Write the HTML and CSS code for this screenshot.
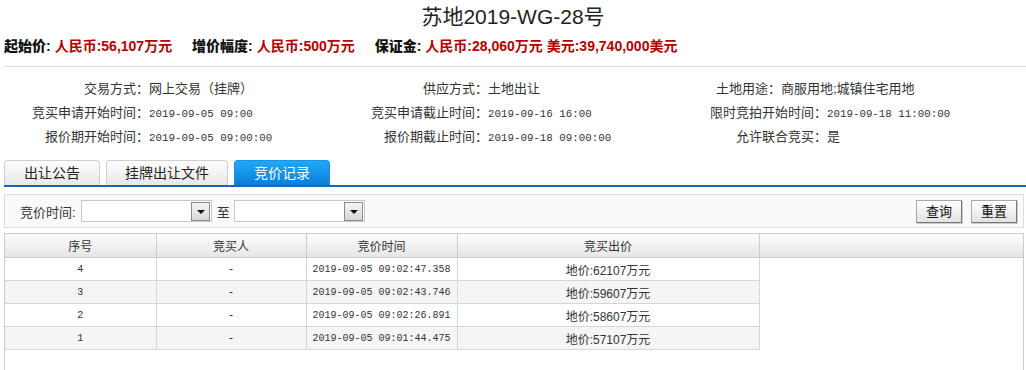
FILE: index.html
```html
<!DOCTYPE html>
<html lang="zh-CN">
<head>
    <meta charset="UTF-8">
    <meta name="viewport" content="width=device-width, initial-scale=1.0">
    <title>苏地2019-WG-28号</title>
    <link rel="stylesheet" href="styles.css">
</head>
<body>
    <h1 class="title">苏地2019-WG-28号</h1>

    <div class="price-row">
        <span class="price-item"><b>起始价:</b><em>人民币:56,107万元</em></span>
        <span class="price-item"><b>增价幅度:</b><em>人民币:500万元</em></span>
        <span class="price-item"><b>保证金:</b><em>人民币:28,060万元 美元:39,740,000美元</em></span>
    </div>

    <div class="info">
        <div class="info-row first">
            <span class="label">交易方式：</span><span class="value">网上交易（挂牌）</span>
            <span class="label">供应方式：</span><span class="value">土地出让</span>
            <span class="label">土地用途：</span><span class="value">商服用地;城镇住宅用地</span>
        </div>
        <div class="info-row">
            <span class="label">竞买申请开始时间：</span><span class="value"><span class="num">2019-09-05 09:00</span></span>
            <span class="label">竞买申请截止时间：</span><span class="value"><span class="num">2019-09-16 16:00</span></span>
            <span class="label">限时竞拍开始时间：</span><span class="value"><span class="num">2019-09-18 11:00:00</span></span>
        </div>
        <div class="info-row">
            <span class="label">报价期开始时间：</span><span class="value"><span class="num">2019-09-05 09:00:00</span></span>
            <span class="label">报价期截止时间：</span><span class="value"><span class="num">2019-09-18 09:00:00</span></span>
            <span class="label">允许联合竞买：</span><span class="value">是</span>
        </div>
    </div>

    <div class="tabs">
        <div class="tab">出让公告</div>
        <div class="tab">挂牌出让文件</div>
        <div class="tab active">竞价记录</div>
    </div>

    <div class="filter">
        <span class="filter-label">竞价时间:</span>
        <div class="combo"><span class="combo-btn"></span></div>
        <span class="to">至</span>
        <div class="combo"><span class="combo-btn"></span></div>
        <div class="buttons">
            <button class="btn">查询</button>
            <button class="btn">重置</button>
        </div>
    </div>

    <div class="grid-box">
        <table class="grid">
            <colgroup>
                <col style="width: 151px">
                <col style="width: 150px">
                <col style="width: 151px">
                <col style="width: 302px">
                <col>
            </colgroup>
            <thead>
                <tr><th>序号</th><th>竞买人</th><th>竞价时间</th><th>竞买出价</th><th></th></tr>
            </thead>
            <tbody>
                <tr><td class="num">4</td><td>-</td><td class="num">2019-09-05 09:02:47.358</td><td class="price">地价:62107万元</td></tr>
                <tr><td class="num">3</td><td>-</td><td class="num">2019-09-05 09:02:43.746</td><td class="price">地价:59607万元</td></tr>
                <tr><td class="num">2</td><td>-</td><td class="num">2019-09-05 09:02:26.891</td><td class="price">地价:58607万元</td></tr>
                <tr><td class="num">1</td><td>-</td><td class="num">2019-09-05 09:01:44.475</td><td class="price">地价:57107万元</td></tr>
            </tbody>
        </table>
    </div>
</body>
</html>
```

FILE: styles.css
```css
html, body {
    overflow: hidden;
}
body {
    margin: 0;
    font-family: "Liberation Sans", "Noto Sans CJK SC", sans-serif;
    font-size: 12px;
    color: #333;
    background: #fff;
}
.title {
    margin: 0;
    height: 34px;
    line-height: 34px;
    font-size: 21px;
    font-weight: normal;
    text-align: center;
    color: #222;
}
.price-row {
    height: 24px;
    line-height: 24px;
    margin-left: 4px;
    padding-bottom: 8px;
    font-size: 14px;
    font-weight: bold;
    border-bottom: 1px solid #ddd;
}
.price-item {
    margin-right: 16px;
    color: #111;
}
.price-item em {
    font-style: normal;
    color: #b80000;
    margin-left: 4px;
}
.info {
    padding-top: 10px;
    font-size: 13px;
}
.info-row {
    display: grid;
    grid-template-columns: 149px 191px 148px 191px 148px 1fr;
    height: 24px;
    line-height: 24px;
}
.info-row.first {
    grid-template-columns: 149px 191px 148px 191px 102px 1fr;
}
.label {
    text-align: right;
    white-space: nowrap;
}
.value {
    white-space: nowrap;
}
.num {
    font-family: "Liberation Mono", monospace;
    font-size: 10.8px;
}
.tabs {
    display: flex;
    align-items: flex-end;
    height: 25px;
    margin: 11px 0 0 4px;
    border-bottom: 2px solid #1767b4;
}
.tab {
    height: 24px;
    line-height: 24px;
    padding: 0 19px;
    margin-right: 6px;
    font-size: 14px;
    color: #222;
    border: 1px solid #cfcfcf;
    border-bottom: none;
    border-radius: 4px 4px 0 0;
    background: linear-gradient(#fdfdfd, #e8e8e8);
}
.tab:nth-child(2) {
    padding: 0 18px;
}
.tab.active {
    color: #fff;
    border-color: #1a92e8;
    background: linear-gradient(#22a8f8, #0a7edb);
}
.filter {
    display: flex;
    align-items: center;
    height: 32px;
    margin: 7px 2px 0 4px;
    padding: 0 6px 0 15px;
    border: 1px solid #ddd;
    background: #fafafa;
    font-size: 13px;
}
.filter-label {
    margin-right: 5px;
}
.combo {
    display: flex;
    justify-content: flex-end;
    align-items: center;
    box-sizing: border-box;
    width: 131px;
    height: 22px;
    padding-right: 1px;
    border: 1px solid #c8c8c8;
    background: #fff;
}
.combo-btn {
    position: relative;
    width: 17px;
    height: 17px;
    border: 1px solid #8c8c8c;
    background: linear-gradient(#f6f6f6, #d6d6d6);
}
.combo-btn::after {
    content: "";
    position: absolute;
    left: 5px;
    top: 7px;
    border-left: 4px solid transparent;
    border-right: 4px solid transparent;
    border-top: 4px solid #111;
}
.to {
    margin: 0 4px 0 5px;
}
.buttons {
    display: flex;
    gap: 9px;
    margin-left: auto;
}
.btn {
    height: 23px;
    padding: 0 9px;
    font-family: "Noto Sans CJK SC", sans-serif;
    font-size: 13px;
    line-height: 20px;
    color: #111;
    border: 1px solid #a8a8a8;
    border-right-color: #777;
    border-bottom-color: #777;
    box-shadow: 1px 1px 0 #ccc;
    background: linear-gradient(#fff, #e2e2e2);
}
.grid-box {
    height: 137px;
    margin: 5px 2px 0 4px;
    border: 1px solid #ccc;
    border-bottom: none;
}
.grid {
    width: 100%;
    table-layout: fixed;
    border-collapse: collapse;
}
.grid th {
    height: 23px;
    padding: 0;
    font-weight: normal;
    font-size: 12px;
    color: #333;
    border-right: 1px solid #ccc;
    border-bottom: 1px solid #ccc;
    background: linear-gradient(#fcfcfc, #e6e6e6);
}
.grid th:last-child {
    border-right: none;
}
.grid td {
    height: 22px;
    padding: 0;
    text-align: center;
    border-right: 1px solid #d6d6d6;
    border-bottom: 1px solid #d6d6d6;
}
.grid tbody tr:nth-child(even) td {
    background: #f5f5f5;
}
.grid td.num {
    font-size: 10px;
}
.grid td.price {
    font-size: 12px;
}
```
